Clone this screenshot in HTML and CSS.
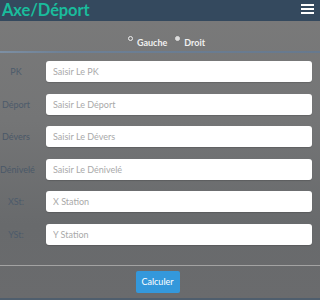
FILE: index.html
```html
<!DOCTYPE html>
<html lang="fr">
<head>
<meta charset="utf-8">
<link rel="stylesheet" href="styles.css">
</head>
<body>
<header class="topbar">
  <span class="title">Axe/Déport</span>
  <span class="burger"><i></i><i></i><i></i></span>
</header>
<main class="page">
  <div class="radios">
    <label class="radio"><span class="dot"></span>Gauche</label>
    <label class="radio"><span class="dot filled"></span>Droit</label>
  </div>
  <hr class="sep-blue">
  <form class="form">
    <div class="row"><span class="lbl">PK</span><input class="field" placeholder="Saisir Le PK"></div>
    <div class="row"><span class="lbl">Déport</span><input class="field" placeholder="Saisir Le Déport"></div>
    <div class="row"><span class="lbl dark">Dévers</span><input class="field" placeholder="Saisir Le Dévers"></div>
    <div class="row"><span class="lbl dark">Dénivelé</span><input class="field" placeholder="Saisir Le Dénivelé"></div>
    <div class="row"><span class="lbl">XSt:</span><input class="field" placeholder="X Station"></div>
    <div class="row"><span class="lbl">YSt:</span><input class="field" placeholder="Y Station"></div>
  </form>
  <hr class="sep-gray">
  <div class="actions"><button class="btn" type="button">Calculer</button></div>
</main>
<div class="bottom"></div>
</body>
</html>
```
FILE: styles.css
```css
* { box-sizing: border-box; }
html, body { margin: 0; padding: 0; }
html { background: #6a6b6d; }
body {
  width: 100%;
  height: 300px;
  overflow: hidden;
  position: relative;
  font-family: Lato, "Liberation Sans", sans-serif;
  background: linear-gradient(180deg, #7a7a7a 0%, #747576 40%, #686a6c 75%, #6a6b6d 100%);
}
.topbar {
  height: 21px;
  background: #34495e;
  display: flex;
  align-items: center;
  justify-content: space-between;
  padding: 0 6px 0 2px;
}
.title {
  color: #1abc9c;
  font-weight: 700;
  font-size: 16.5px;
  line-height: 21px;
  letter-spacing: -0.1px;
}
.burger {
  display: flex;
  flex-direction: column;
  gap: 2px;
  width: 13px;
  margin-top: -3px;
}
.burger i {
  display: block;
  height: 2px;
  background: #ffffff;
}
.page { display: flex; flex-direction: column; }
.radios {
  display: flex;
  justify-content: center;
  gap: 8px;
  padding-top: 15px;
  height: 30px;
  padding-left: 13px;
}
.radio {
  display: flex;
  align-items: flex-start;
  color: #f0f0f0;
  font-size: 9px;
  font-weight: 700;
  line-height: 14px;
}
.dot {
  width: 5px;
  height: 5px;
  border-radius: 50%;
  border: 1.3px solid #eeeeee;
  margin: 0 4px 0 0;
}
.dot.filled { background: #dddddd; border-color: #dddddd; }
.sep-blue {
  margin: 0;
  border: 0;
  height: 2px;
  background: linear-gradient(90deg, #7d8fa3 0%, #6d8096 20%, #67798e 100%);
}
.form {
  display: flex;
  flex-direction: column;
  gap: 11.6px;
  padding: 8px 8px 0 0;
}
.row {
  display: flex;
  align-items: center;
  height: 21px;
}
.lbl {
  width: 32px;
  text-align: center;
  font-size: 9px;
  color: #4d5b6b;
  margin-right: 14px;
  white-space: nowrap;
}
.lbl.dark { color: #4a5868; }
.field {
  flex: 1;
  height: 21px;
  border: 0;
  border-radius: 3px;
  background: #ffffff;
  padding: 0 7px;
  font-family: Lato, "Liberation Sans", sans-serif;
  font-size: 9px;
  color: #555;
  box-shadow: 0 1px 1px rgba(0,0,0,0.15);
}
.field::placeholder { color: #a9a9a9; }
.sep-gray {
  margin: 20px 0 0 0;
  border: 0;
  height: 1px;
  background: #a3a3a3;
}
.actions {
  display: flex;
  justify-content: center;
  padding-top: 5px;
  padding-right: 5px;
}
.btn {
  width: 44px;
  height: 22px;
  border: 0;
  border-radius: 2px;
  background: #3498db;
  color: #ffffff;
  font-family: Lato, "Liberation Sans", sans-serif;
  font-size: 9px;
  padding: 0;
}
.bottom {
  position: absolute;
  left: 0;
  bottom: 0;
  width: 100%;
  height: 2px;
  background: #4f5e6d;
}
```
